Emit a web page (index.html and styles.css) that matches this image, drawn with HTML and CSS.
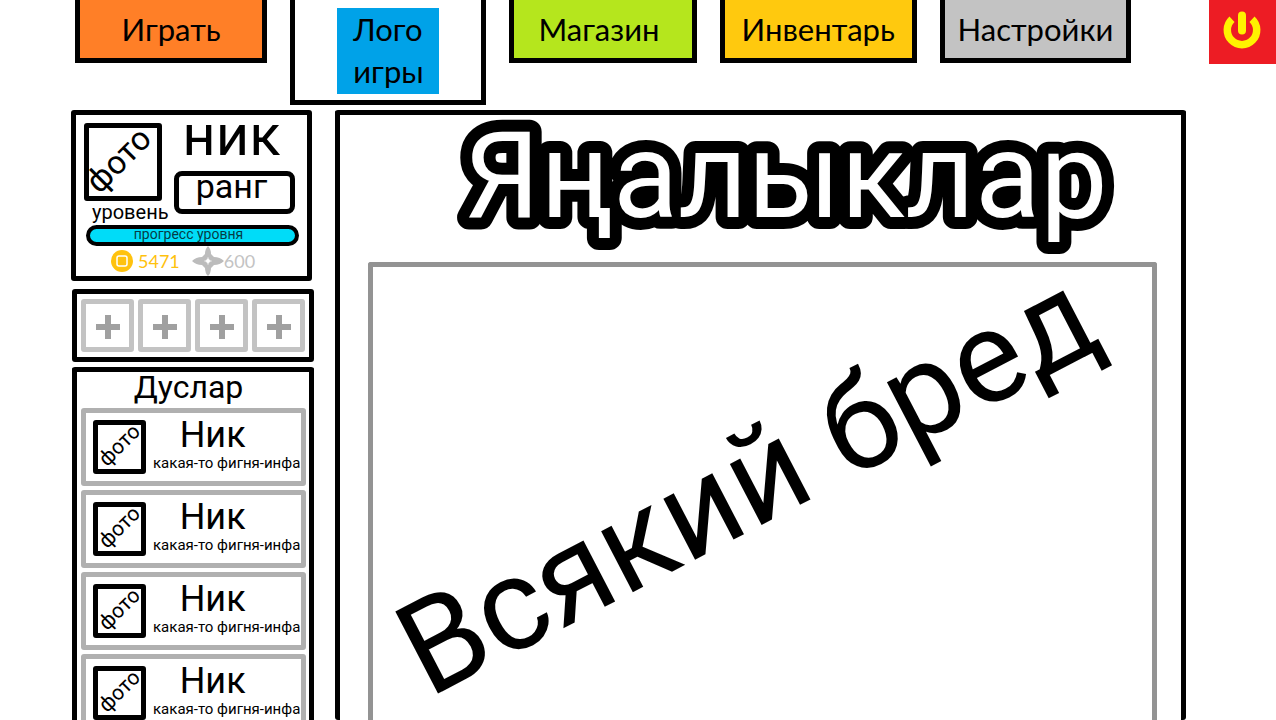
FILE: index.html
```html
<!DOCTYPE html>
<html lang="ru">
<head>
<meta charset="utf-8">
<meta name="viewport" content="width=device-width, initial-scale=1">
<title>Игра</title>
<link rel="stylesheet" href="styles.css">
</head>
<body>
<div class="page">
  <header class="topbar">
    <nav class="tabs">
      <button class="tab tab-play" type="button">Играть</button>
      <div class="logo-frame"><div class="logo">Лого<br>игры</div></div>
      <button class="tab tab-shop" type="button">Магазин</button>
      <button class="tab tab-inventory" type="button">Инвентарь</button>
      <button class="tab tab-settings" type="button">Настройки</button>
    </nav>
    <button class="power" type="button" aria-label="Выход">
      <svg width="40" height="40" viewBox="0 0 40 40" aria-hidden="true">
        <path d="M10 9.2A14.7 14.7 0 1 0 30 9.2" fill="none" stroke="#fff200" stroke-width="7.5"/>
        <path d="M20 5.5V20.5" stroke="#fff200" stroke-width="8" stroke-linecap="round"/>
      </svg>
    </button>
  </header>
  <main class="content">
    <aside class="sidebar">
      <section class="panel profile">
        <div class="profile-head">
          <div class="profile-left">
            <div class="photo photo-large"><span>фото</span></div>
            <span class="level">уровень</span>
          </div>
          <div class="profile-right">
            <h2 class="nick">ник</h2>
            <div class="rank">ранг</div>
          </div>
        </div>
        <div class="progress">прогресс уровня</div>
        <div class="wallet">
          <span class="coins">
            <svg width="24" height="24" viewBox="0 0 24 24" aria-hidden="true">
              <circle cx="12" cy="12" r="11" fill="#ffc20e"/>
              <rect x="7" y="7" width="10" height="10" rx="2" fill="#ffc20e" stroke="#fff" stroke-width="1.5"/>
            </svg>5471</span>
          <span class="stars">
            <svg width="32" height="30" viewBox="0 0 32 30" aria-hidden="true">
              <path d="M16 0Q19 3 19 8L22 11Q28 11 32 15Q28 19 22 19L19 22Q19 27 16 30Q13 27 13 22L10 19Q4 19 0 15Q4 11 10 11L13 8Q13 3 16 0Z" fill="#bcbcbc"/>
              <path d="M16 11.5V18.5M12.5 15H19.5" stroke="#fff" stroke-width="1"/>
              <circle cx="16" cy="15" r="2" fill="#fff"/>
            </svg>600</span>
        </div>
      </section>
      <section class="panel slots">
        <button class="slot" type="button" aria-label="Добавить"></button>
        <button class="slot" type="button" aria-label="Добавить"></button>
        <button class="slot" type="button" aria-label="Добавить"></button>
        <button class="slot" type="button" aria-label="Добавить"></button>
      </section>
      <section class="panel friends">
        <h2 class="friends-title">Дуслар</h2>
        <div class="friend">
          <div class="photo photo-small"><span>фото</span></div>
          <div class="friend-text"><span class="friend-name">Ник</span><span class="friend-info">какая-то фигня-инфа</span></div>
        </div>
        <div class="friend">
          <div class="photo photo-small"><span>фото</span></div>
          <div class="friend-text"><span class="friend-name">Ник</span><span class="friend-info">какая-то фигня-инфа</span></div>
        </div>
        <div class="friend">
          <div class="photo photo-small"><span>фото</span></div>
          <div class="friend-text"><span class="friend-name">Ник</span><span class="friend-info">какая-то фигня-инфа</span></div>
        </div>
        <div class="friend">
          <div class="photo photo-small"><span>фото</span></div>
          <div class="friend-text"><span class="friend-name">Ник</span><span class="friend-info">какая-то фигня-инфа</span></div>
        </div>
      </section>
    </aside>
    <section class="panel news">
      <svg class="news-title" role="heading" aria-level="1">
        <text x="53%" y="102" text-anchor="middle">Яңалыклар</text>
      </svg>
      <div class="news-body"><p class="news-text">Всякий бред</p></div>
    </section>
  </main>
</div>
</body>
</html>
```
FILE: styles.css
```css
* {
  box-sizing: border-box;
}

body {
  margin: 0;
  background: #fff;
  color: #000;
  font-family: Roboto, "Noto Sans", sans-serif;
}

h2,
p {
  margin: 0;
  font-weight: 400;
}

button {
  padding: 0;
  border: 0;
  color: inherit;
  font: inherit;
}

.page {
  display: flex;
  flex-direction: column;
  height: 100vh;
  overflow: hidden;
}

/* Top bar */
.topbar {
  display: flex;
  align-items: flex-start;
  padding-left: 75px;
  flex: none;
}

.tabs {
  display: grid;
  grid-template-columns: 192fr 196fr 187fr 197fr 191fr;
  gap: 23px;
  flex: 1;
  align-items: start;
  margin-right: 78px;
  font-family: Lato, "Open Sans", sans-serif;
  font-size: 31px;
}

.tab {
  height: 63px;
  border: 5px solid #000;
  border-top: 0;
  white-space: nowrap;
}

.tab-play {
  background: #ff7f27;
}

.tab-shop {
  padding-right: 8px;
  background: #b5e61d;
}

.tab-inventory {
  background: #ffc90e;
}

.tab-settings {
  background: #c3c3c3;
}

.logo-frame {
  display: flex;
  justify-content: center;
  padding: 8px 0 6px;
  border: 5px solid #000;
  border-top: 0;
}

.logo {
  width: 102px;
  height: 86px;
  padding-left: 16px;
  background: #00a2e8;
  line-height: 42px;
}

.power {
  display: grid;
  place-items: center;
  width: 67px;
  height: 64px;
  padding: 0 2px 5px 0;
  background: #ed1c24;
}

/* Layout below the bar */
.content {
  display: flex;
  flex: 1;
  gap: 21px;
  min-height: 0;
  padding: 5px 90px 0 71px;
}

.sidebar {
  display: flex;
  flex-direction: column;
  gap: 8px;
  flex: none;
  width: 243px;
}

.panel {
  border: 5px solid #000;
  border-radius: 3px;
}

/* Profile */
.profile {
  flex: none;
  height: 171px;
  margin-right: 2px;
  padding: 8px 8px 0;
}

.profile-head {
  display: flex;
  gap: 12px;
}

.photo {
  display: flex;
  align-items: center;
  justify-content: center;
  border: 5px solid #000;
  border-radius: 3px;
}

.photo span {
  transform: rotate(-45deg);
}

.photo-large {
  width: 78px;
  height: 78px;
  padding: 0 9px 6px 0;
  font-size: 33px;
}

.level {
  display: block;
  padding-left: 8px;
  font-size: 20px;
  line-height: 22px;
}

.profile-left {
  width: 78px;
}

.profile-right {
  flex: 1;
  padding-right: 4px;
}

.nick {
  height: 48px;
  padding-right: 6px;
  font-size: 58px;
  line-height: 24px;
  text-align: center;
}

.rank {
  height: 43px;
  padding-right: 6px;
  border: 5px solid #000;
  border-radius: 8px;
  font-size: 34px;
  line-height: 20px;
  text-align: center;
}

.progress {
  height: 21px;
  margin: 2px 0 0 2px;
  padding-right: 8px;
  border: 4px solid #000;
  border-radius: 11px;
  background: #00dcf8;
  color: #053c46;
  font-size: 14px;
  line-height: 10px;
  text-align: center;
}

.wallet {
  display: flex;
  gap: 12px;
  padding-left: 26px;
  font-family: Lato, "Open Sans", sans-serif;
  font-size: 18px;
}

.coins,
.stars {
  display: flex;
  align-items: center;
}

.coins {
  gap: 4px;
  color: #ffc20e;
}

.stars {
  color: #c3c3c3;
}

/* Slots */
.slots {
  display: grid;
  grid-template-columns: repeat(4, 1fr);
  gap: 4px;
  flex: none;
  height: 73px;
  margin-left: 1px;
  padding: 5px 4px;
}

.slot {
  border: 5px solid #c3c3c3;
  border-radius: 3px;
  background:
    linear-gradient(#a0a0a0, #a0a0a0) center 11px / 24px 6px no-repeat,
    linear-gradient(#a0a0a0, #a0a0a0) center 11px / 6px 24px no-repeat,
    #fff;
  background-position: center 20px, center 11px;
}

/* Friends */
.friends {
  flex: 1;
  margin: -3px 0 0 1px;
  padding: 0 3px 0 4px;
  border-bottom: 0;
}

.friends-title {
  padding: 0 10px 6px 0;
  font-size: 32px;
  line-height: 30px;
  text-align: center;
}

.friend {
  display: flex;
  gap: 7px;
  height: 78px;
  margin-bottom: 4px;
  padding: 7px 3px 0 7px;
  border: 5px solid #b0b0b0;
  border-radius: 3px;
}

.photo-small {
  flex: none;
  width: 53px;
  height: 54px;
  padding-bottom: 4px;
  font-size: 21px;
}

.friend-text {
  display: flex;
  flex-direction: column;
}

.friend-name {
  padding-right: 28px;
  font-size: 36px;
  line-height: 30px;
  text-align: center;
}

.friend-info {
  font-size: 15px;
  line-height: 26px;
  white-space: nowrap;
}

/* News */
.news {
  display: flex;
  flex: 1;
  flex-direction: column;
  min-width: 0;
  border-bottom: 0;
}

.news-title {
  flex: none;
  width: 100%;
  height: 147px;
  overflow: visible;
  fill: #fff;
  stroke: #000;
  stroke-width: 24px;
  stroke-linejoin: round;
  paint-order: stroke;
  font-size: 120px;
}

.news-body {
  display: flex;
  flex: 1;
  align-items: center;
  justify-content: center;
  margin: 0 24px 0 28px;
  padding: 0 30px 22px 0;
  border: 5px solid #939393;
  border-bottom: 0;
  border-radius: 3px 3px 0 0;
}

.news-text {
  font-size: 130px;
  line-height: 150px;
  white-space: nowrap;
  transform: rotate(-27.5deg);
}
```
